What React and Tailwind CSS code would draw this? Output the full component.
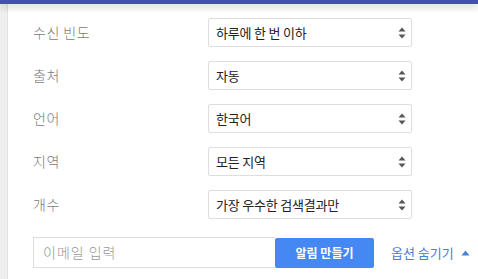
const font = { fontFamily: '"Noto Sans CJK KR", "Noto Sans", sans-serif' };

const rows = [
  { label: "수신 빈도", value: "하루에 한 번 이하" },
  { label: "출처", value: "자동" },
  { label: "언어", value: "한국어" },
  { label: "지역", value: "모든 지역" },
  { label: "개수", value: "가장 우수한 검색결과만" },
];

function Arrows() {
  return (
    <svg width="8" height="12" viewBox="0 0 8 12" className="shrink-0">
      <path d="M4 0.5 L7.5 4.5 L0.5 4.5 Z" fill="#555" />
      <path d="M4 11.5 L7.5 7.5 L0.5 7.5 Z" fill="#555" />
    </svg>
  );
}

export default function App() {
  return (
    <div
      className="w-[478px] h-[279px] overflow-hidden bg-white flex flex-col"
      style={font}
    >
      <div className="h-[4px] bg-[#4350b3] relative z-10 shadow-[0_3px_7px_rgba(0,0,0,0.22)]" />
      <div className="flex flex-1">
        <div className="w-[8px] bg-[#efefef] border-r border-[#e2e2e2]" />
        <div className="flex-1 pl-[25px] pt-[14px]">
          <div className="flex flex-col gap-[14px]">
            {rows.map((r) => (
              <div key={r.label} className="flex items-center h-[29px]">
                <div className="w-[175px] text-[14px] text-[#7a7a7a] tracking-[0.5px] font-light">
                  {r.label}
                </div>
                <div className="w-[204px] h-[29px] border border-[#dedede] rounded-[2px] flex items-center justify-between pl-[7px] pr-[5px] text-[13px] text-[#222] tracking-[-0.2px]">
                  <span>{r.value}</span>
                  <Arrows />
                </div>
              </div>
            ))}
          </div>
          <div className="flex items-center mt-[18px]">
            <div className="w-[242px] h-[31px] border border-[#dcdcdc] border-r-0 flex items-center pl-[9px] text-[14px] text-[#999] tracking-[1px] font-light">
              이메일 입력
            </div>
            <button className="w-[99px] h-[30px] bg-[#4588f3] rounded-[2px] text-white text-[12px] font-bold flex items-center justify-center">
              알림 만들기
            </button>
            <div className="ml-[17px] flex items-center gap-[7px] text-[13px] text-[#4a80d6]">
              <span>옵션 숨기기</span>
              <svg width="9" height="6" viewBox="0 0 9 6">
                <path d="M4.5 0.5 L8.5 5.5 L0.5 5.5 Z" fill="#4a80d6" />
              </svg>
            </div>
          </div>
        </div>
      </div>
    </div>
  );
}
